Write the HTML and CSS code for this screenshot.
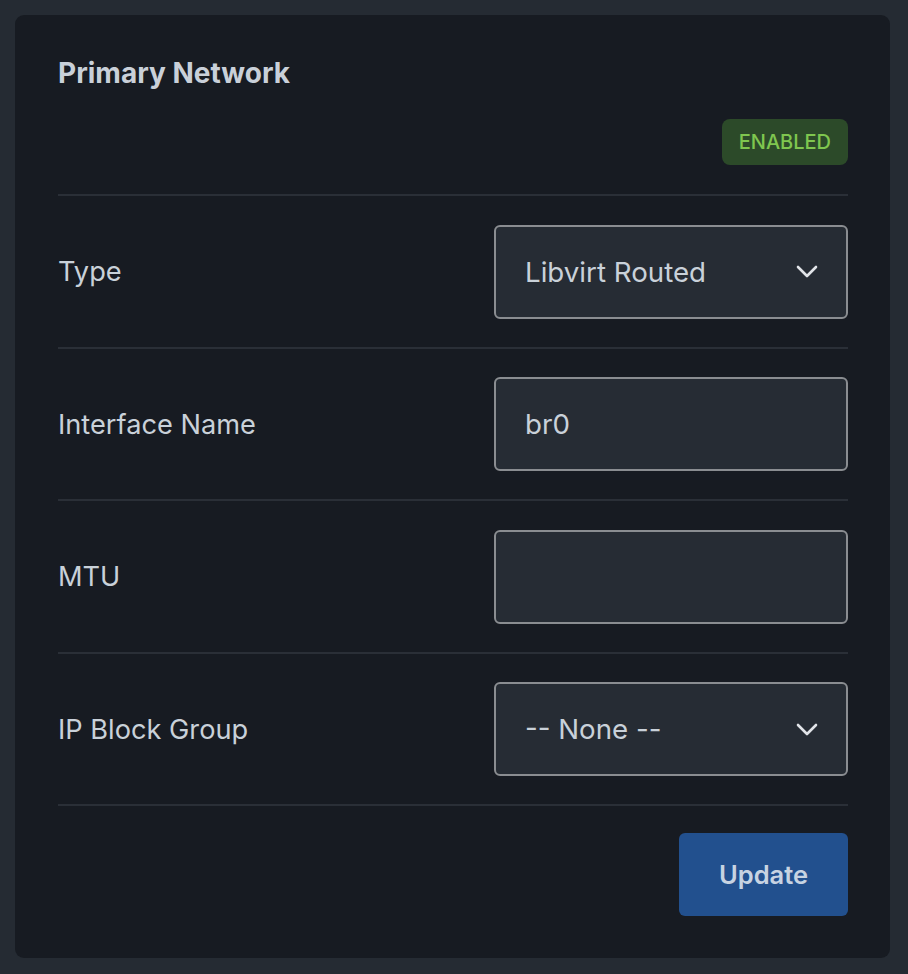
FILE: index.html
```html
<!DOCTYPE html>
<html>
<head>
<meta charset="utf-8">
<link rel="stylesheet" href="styles.css">
</head>
<body>
<div class="card">
  <div class="header">
    <h2 class="title">Primary Network</h2>
    <div class="badge-row"><span class="badge">ENABLED</span></div>
  </div>
  <div class="row">
    <label class="label">Type</label>
    <div class="control select">
      <span class="value">Libvirt Routed</span>
      <svg class="chev" width="22" height="13" viewBox="0 0 22 13"><path d="M2 2 L11 11 L20 2" fill="none" stroke="#e1e4e8" stroke-width="2.6" stroke-linecap="round" stroke-linejoin="round"/></svg>
    </div>
  </div>
  <div class="row">
    <label class="label">Interface Name</label>
    <div class="control input"><span class="value">br0</span></div>
  </div>
  <div class="row">
    <label class="label">MTU</label>
    <div class="control input"><span class="value"></span></div>
  </div>
  <div class="row">
    <label class="label">IP Block Group</label>
    <div class="control select">
      <span class="value">-- None --</span>
      <svg class="chev" width="22" height="13" viewBox="0 0 22 13"><path d="M2 2 L11 11 L20 2" fill="none" stroke="#e1e4e8" stroke-width="2.6" stroke-linecap="round" stroke-linejoin="round"/></svg>
    </div>
  </div>
  <div class="actions">
    <button class="btn">Update</button>
  </div>
</div>
</body>
</html>
```
FILE: styles.css
```css
* { box-sizing: border-box; }
html, body { margin: 0; padding: 0; }
body {
  background: #252b33;
  font-family: Inter, "Noto Sans", sans-serif;
  color: #c9d1d9;
  padding: 15px;
  height: 974px;
}
.card {
  width: 875px;
  height: 943px;
  background: #171b22;
  border-radius: 9px;
  padding: 38px 42px 42px 43px;
}
.header {
  border-bottom: 2px solid #2a2f37;
  padding-bottom: 29px;
}
.title {
  margin: 0;
  font-size: 28px;
  line-height: 40px;
  font-weight: 700;
  color: #c9d0d9;
}
.badge-row {
  display: flex;
  justify-content: flex-end;
  margin-top: 26px;
}
.badge {
  display: inline-block;
  height: 46px;
  line-height: 46px;
  padding: 0 17px;
  border-radius: 8px;
  background: #2c4a29;
  color: #7fc64f;
  font-size: 20px;
  font-weight: 500;
  letter-spacing: 0;
}
.row {
  display: flex;
  align-items: center;
  justify-content: space-between;
  padding: 28.5px 0 28px;
  border-bottom: 2px solid #2a2f37;
}
.label {
  font-size: 27.2px;
  color: #c9d1d9;
}
.control {
  width: 354px;
  height: 94px;
  border: 2px solid #8a8d91;
  border-radius: 6px;
  background: #262c34;
  display: flex;
  align-items: center;
  justify-content: space-between;
  padding: 0 28px 0 29px;
}
.value {
  font-size: 27.7px;
  color: #c9d1d9;
}
.chev { display: block; }
.actions {
  display: flex;
  justify-content: flex-end;
  padding-top: 27px;
}
.btn {
  width: 169px;
  height: 83px;
  border: none;
  border-radius: 6px;
  background: #22508e;
  color: #c7d3e2;
  font-family: Inter, "Noto Sans", sans-serif;
  font-size: 25.5px;
  font-weight: 600;
}
```
